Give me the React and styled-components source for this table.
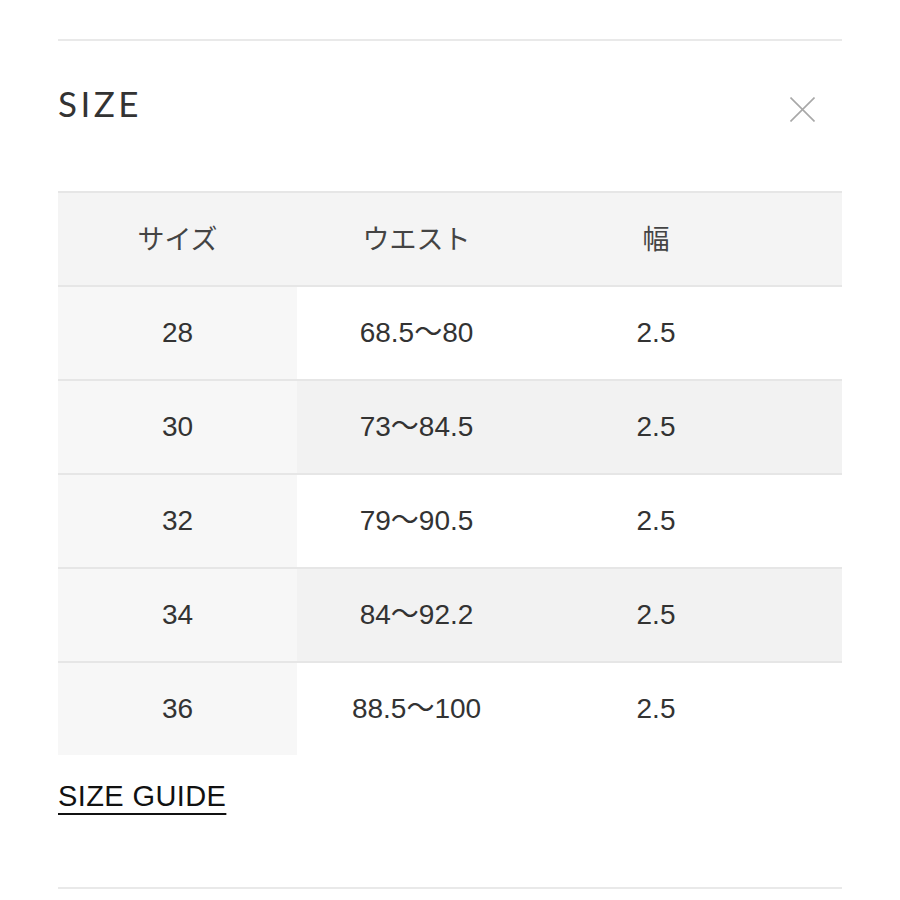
import React from 'react';
import styled, { createGlobalStyle } from 'styled-components';

const GlobalStyle = createGlobalStyle`
  html, body {
    margin: 0;
    padding: 0;
    background: #ffffff;
  }
  body {
    font-family: "Liberation Sans", "Noto Sans CJK JP", Arial, sans-serif;
    color: #333;
  }
`;

const Page = styled.div`
  width: 900px;
  box-sizing: border-box;
  padding: 39px 58px 0;
`;

const Panel = styled.section`
  border-top: 2px solid #e9e9e9;
  border-bottom: 2px solid #e9e9e9;
  padding-bottom: 75px;
`;

const Head = styled.div`
  height: 150px;
  display: flex;
  justify-content: space-between;
  align-items: flex-start;
`;

const Title = styled.h2`
  margin: 45px 0 0;
  font-family: "Lato", "Open Sans", sans-serif;
  font-weight: 400;
  font-size: 35px;
  line-height: 1;
  letter-spacing: 3.5px;
  color: #333;
`;

const Close = styled.button`
  margin: 56px 27px 0 0;
  padding: 0;
  border: none;
  background: none;
  width: 25px;
  height: 25px;
  cursor: pointer;
`;

const Table = styled.div`
  display: flex;
  flex-direction: column;
`;

const Row = styled.div`
  display: grid;
  grid-template-columns: 239px 239px 240px 1fr;
  height: 94px;
  box-sizing: border-box;
  border-top: 2px solid #e6e6e6;
  background: ${p => (p.$head ? '#f4f4f4' : p.$alt ? '#f2f2f2' : '#ffffff')};
`;

const Cell = styled.div`
  display: flex;
  align-items: center;
  justify-content: center;
  font-size: 28px;
  line-height: 32px;
  color: #333;
  background: ${p => (p.$first ? '#f7f7f7' : 'transparent')};
`;

const HeadCell = styled(Cell)`
  font-family: "Noto Sans CJK JP", sans-serif;
  font-size: 27px;
  line-height: 1;
  padding-bottom: 4px;
  color: #444;
  background: transparent;
`;

const Dash = styled.span`
  font-family: "Noto Sans CJK JP", sans-serif;
  line-height: 0;
`;

const Guide = styled.a`
  display: inline-block;
  margin-top: 25px;
  font-size: 29px;
  line-height: 32px;
  letter-spacing: 0.4px;
  color: #111;
  text-decoration: underline;
  text-decoration-thickness: 2px;
  text-underline-offset: 7px;
  cursor: pointer;
`;

const rows = [
  ['28', '68.5', '80', '2.5'],
  ['30', '73', '84.5', '2.5'],
  ['32', '79', '90.5', '2.5'],
  ['34', '84', '92.2', '2.5'],
  ['36', '88.5', '100', '2.5'],
];

export default function App() {
  return (
    <Page>
      <GlobalStyle />
      <Panel>
        <Head>
          <Title>SIZE</Title>
          <Close aria-label="close">
            <svg width="25" height="25" viewBox="0 0 25 25">
              <path d="M0.5 0.5 L24.5 24.5 M24.5 0.5 L0.5 24.5" stroke="#a8a8a8" strokeWidth="1.6" fill="none" />
            </svg>
          </Close>
        </Head>
        <Table>
          <Row $head>
            <HeadCell>サイズ</HeadCell>
            <HeadCell>ウエスト</HeadCell>
            <HeadCell>幅</HeadCell>
            <HeadCell />
          </Row>
          {rows.map((r, i) => (
            <Row key={r[0]} $alt={i % 2 === 1}>
              <Cell $first>{r[0]}</Cell>
              <Cell>
                <span>{r[1]}<Dash>〜</Dash>{r[2]}</span>
              </Cell>
              <Cell>{r[3]}</Cell>
              <Cell />
            </Row>
          ))}
        </Table>
        <Guide>SIZE GUIDE</Guide>
      </Panel>
    </Page>
  );
}
